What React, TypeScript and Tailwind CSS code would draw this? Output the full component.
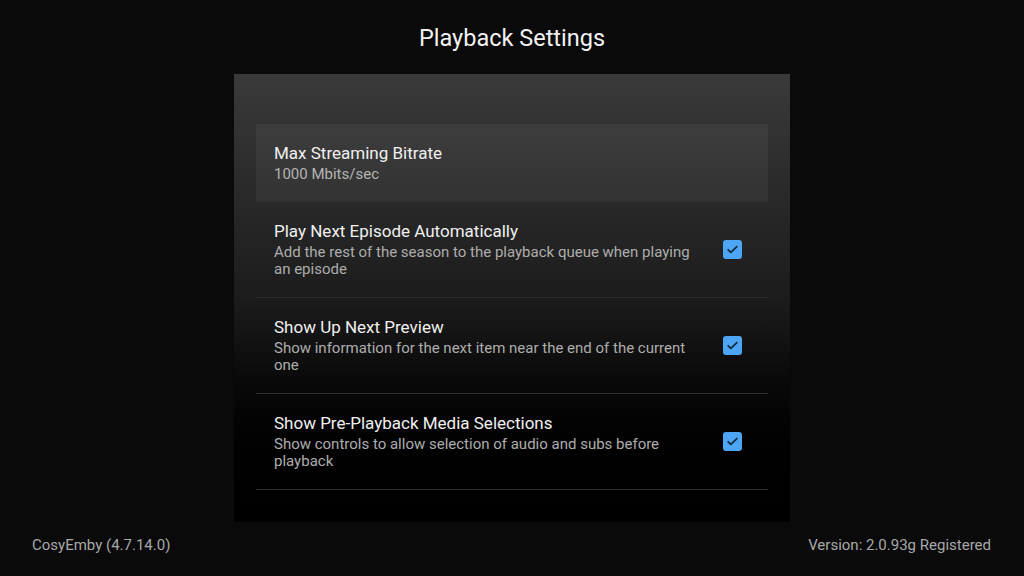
import React from "react";

function Check() {
  return (
    <div className="w-[19px] h-[19px] rounded-[3px] bg-[#4ca6f5] flex items-center justify-center shrink-0">
      <svg width="13" height="13" viewBox="0 0 24 24" fill="none">
        <path d="M4 12.5l5 5L20 6.5" stroke="#1b2a38" strokeWidth="3.2" strokeLinecap="round" strokeLinejoin="round" />
      </svg>
    </div>
  );
}

const rows = [
  {
    title: "Play Next Episode Automatically",
    sub: "Add the rest of the season to the playback queue when playing an episode",
  },
  {
    title: "Show Up Next Preview",
    sub: "Show information for the next item near the end of the current one",
  },
  {
    title: "Show Pre-Playback Media Selections",
    sub: "Show controls to allow selection of audio and subs before playback",
  },
];

export default function App() {
  return (
    <div
      className="w-[1024px] h-[576px] bg-[#0a0a0a] flex flex-col overflow-hidden"
      style={{ fontFamily: "Roboto, 'Noto Sans', sans-serif" }}
    >
      <div className="h-[74px] flex items-center justify-center pt-[3px]">
        <h1 className="text-[23.5px] text-[#f2f2f2] leading-none">Playback Settings</h1>
      </div>
      <div className="w-[556px] h-[448px] mx-auto bg-gradient-to-b from-[#3a3a3a] via-[#1c1c1c] to-[#000000] px-[22px] pt-[50px]">
        <div className="h-[78px] bg-[#ffffff0d] px-[18px] flex flex-col justify-center">
          <div className="text-[17px] leading-[20px] text-[#f0f0f0]">Max Streaming Bitrate</div>
          <div className="text-[15px] leading-[18px] text-[#b4b4b4] mt-[2px]">1000 Mbits/sec</div>
        </div>
        {rows.map((r) => (
          <div
            key={r.title}
            className="h-[96px] border-b border-[#2e2e2e] pl-[18px] pr-[26px] flex items-center"
          >
            <div className="w-[432px] flex flex-col">
              <div className="text-[17px] leading-[20px] text-[#f0f0f0]">{r.title}</div>
              <div className="text-[15px] leading-[17px] text-[#adadad] mt-[3px]">{r.sub}</div>
            </div>
            <div className="flex-1" />
            <Check />
          </div>
        ))}
      </div>
      <div className="h-[46px] flex items-center justify-between pl-[32px] pr-[33px] text-[15px] text-[#a8a8a8]">
        <span>CosyEmby (4.7.14.0)</span>
        <span>Version: 2.0.93g Registered</span>
      </div>
    </div>
  );
}
